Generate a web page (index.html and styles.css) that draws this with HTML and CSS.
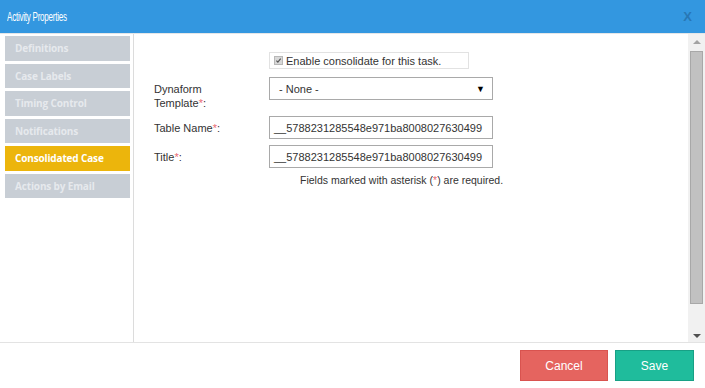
FILE: index.html
```html
<!DOCTYPE html>
<html lang="en">
<head>
    <meta charset="UTF-8">
    <title>Activity Properties</title>
    <link rel="stylesheet" href="styles.css">
</head>
<body>
    <div class="modal">
        <div class="modal-header">
            <span class="modal-title">Activity Properties</span>
            <span class="modal-close">X</span>
        </div>

        <div class="modal-body">
            <ul class="side-menu">
                <li class="menu-item">Definitions</li>
                <li class="menu-item">Case Labels</li>
                <li class="menu-item">Timing Control</li>
                <li class="menu-item">Notifications</li>
                <li class="menu-item active">Consolidated Case</li>
                <li class="menu-item">Actions by Email</li>
            </ul>

            <div class="content">
                <div class="form-row check-row">
                    <label class="check-box">
                        <span class="check-mark">
                            <svg width="9" height="9" viewBox="0 0 9 9"><path d="M1.8 4.6 L3.7 6.6 L7.3 2.2" fill="none" stroke="#555" stroke-width="1.5"/></svg>
                        </span>
                        Enable consolidate for this task.
                    </label>
                </div>

                <div class="form-row">
                    <label class="field-label">Dynaform<br>Template<span class="req">*</span>:</label>
                    <div class="select-box">
                        <span>- None -</span>
                        <span class="select-arrow">&#9660;</span>
                    </div>
                </div>

                <div class="form-row">
                    <label class="field-label">Table Name<span class="req">*</span>:</label>
                    <div class="text-input">__5788231285548e971ba8008027630499</div>
                </div>

                <div class="form-row">
                    <label class="field-label">Title<span class="req">*</span>:</label>
                    <div class="text-input">__5788231285548e971ba8008027630499</div>
                </div>

                <p class="form-note">Fields marked with asterisk (<span class="req">*</span>) are required.</p>
            </div>

            <div class="scrollbar">
                <span class="scroll-arrow up"></span>
                <div class="scroll-thumb"></div>
                <span class="scroll-arrow down"></span>
            </div>
        </div>

        <div class="modal-footer">
            <button class="btn btn-cancel">Cancel</button>
            <button class="btn btn-save">Save</button>
        </div>
    </div>
</body>
</html>
```

FILE: styles.css
```css
* {
    margin: 0;
    padding: 0;
    box-sizing: border-box;
}

body {
    font-family: "Liberation Sans", Arial, sans-serif;
    font-size: 11px;
    color: #333;
    background: #fff;
}

.modal {
    width: 705px;
    height: 388px;
    display: flex;
    flex-direction: column;
}

/* Header */
.modal-header {
    height: 34px;
    background: #3397e0;
    border-bottom: 1px solid #e4e6e8;
    display: flex;
    align-items: center;
    justify-content: space-between;
    padding: 0 13px 0 7px;
}

/* the original title font is a narrow one */
.modal-title {
    color: #fff;
    font-size: 13px;
    letter-spacing: -0.4px;
    transform: scaleX(0.62);
    transform-origin: left center;
}

.modal-close {
    color: #2877b5;
    font-weight: bold;
    font-size: 13px;
}

/* Body */
.modal-body {
    height: 309px;
    display: flex;
    border-bottom: 1px solid #e3e3e3;
}

.side-menu {
    list-style: none;
    width: 134px;
    border-right: 1px solid #dcdcdc;
    padding: 2px 3px 0 5px;
    display: flex;
    flex-direction: column;
    gap: 3px;
}

.menu-item {
    height: 24.5px;
    line-height: 24px;
    background: #c8ced5;
    color: #e6e9ed;
    font-family: "Open Sans", sans-serif;
    font-weight: bold;
    font-size: 10px;
    letter-spacing: -0.15px;
    padding-left: 10px;
}

.menu-item.active {
    background: #ecb50c;
    color: #fff;
}

.content {
    flex: 1;
    padding: 18px 0 0 20px;
}

.form-row {
    display: flex;
    align-items: flex-start;
    margin-bottom: 6px;
}

.check-row {
    padding-left: 115px;
    margin-bottom: 8px;
}

.check-box {
    width: 200px;
    height: 17px;
    border: 1px solid #e2e2e2;
    display: flex;
    align-items: center;
    padding-left: 4px;
    gap: 3px;
}

.check-mark {
    width: 9px;
    height: 9px;
    background: #d8d8d8;
    border: 1px solid #b8b8b8;
    display: flex;
}

.check-mark svg {
    width: 7px;
    height: 7px;
}

.field-label {
    width: 115px;
    line-height: 14px;
    padding-top: 5px;
}

.req {
    color: #e96a73;
}

.select-box,
.text-input {
    width: 224px;
    height: 23px;
    border: 1px solid #a9a9a9;
    display: flex;
    align-items: center;
}

.select-box {
    justify-content: space-between;
    padding: 0 7px 0 9px;
    margin-bottom: 9px;
}

.select-arrow {
    font-size: 9px;
    color: #000;
}

.text-input {
    padding-left: 4px;
}

.form-note {
    padding-left: 146px;
    font-size: 10.5px;
    margin-top: 5px;
}

/* Fake scrollbar */
.scrollbar {
    width: 17px;
    background: #f1f1f1;
    display: flex;
    flex-direction: column;
    align-items: center;
    padding: 6px 0 4px;
}

.scroll-arrow {
    width: 0;
    height: 0;
    border-left: 4px solid transparent;
    border-right: 4px solid transparent;
}

.scroll-arrow.up {
    border-bottom: 4px solid #a3a3a3;
}

.scroll-arrow.down {
    border-top: 4px solid #505050;
}

.scroll-thumb {
    width: 13px;
    height: 253px;
    background: #c1c1c1;
    border: 1px solid #a8a8a8;
    margin: 7px 0 auto;
}

/* Footer */
.modal-footer {
    flex: 1;
    display: flex;
    justify-content: flex-end;
    align-items: flex-start;
    gap: 7px;
    padding: 7px 11px 0 0;
}

.btn {
    height: 31px;
    font-family: "Liberation Sans", Arial, sans-serif;
    font-size: 12px;
    color: #fff;
    cursor: pointer;
}

.btn-cancel {
    width: 88px;
    background: #e5645f;
    border: 1px solid #d9534f;
}

.btn-save {
    width: 79px;
    background: #1fbc9c;
    border: 1px solid #18a085;
}
```
